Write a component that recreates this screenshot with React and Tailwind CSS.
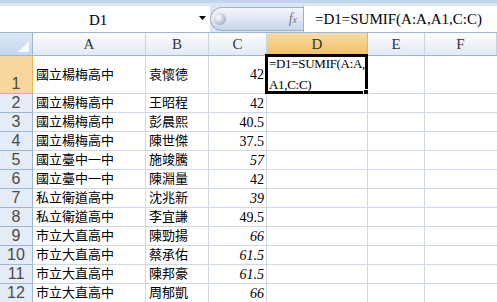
import React from "react";

const rows = [
  ["國立楊梅高中", "袁懷德", "42", false],
  ["國立楊梅高中", "王昭程", "42", false],
  ["國立楊梅高中", "彭晨熙", "40.5", false],
  ["國立楊梅高中", "陳世傑", "37.5", false],
  ["國立臺中一中", "施竣騰", "57", true],
  ["國立臺中一中", "陳淵量", "42", false],
  ["私立衛道高中", "沈兆新", "39", true],
  ["私立衛道高中", "李宜謙", "49.5", false],
  ["市立大直高中", "陳勁揚", "66", true],
  ["市立大直高中", "蔡承佑", "61.5", true],
  ["市立大直高中", "陳邦豪", "61.5", true],
  ["市立大直高中", "周郁凱", "66", true],
];

const cols = ["A", "B", "C", "D", "E", "F"];
const widths = ["w-[113px]", "w-[63px]", "w-[58px]", "w-[101px]", "w-[57px]", "flex-1"];

const serif = "font-['Liberation_Serif','Noto_Sans_CJK_TC',serif]";

const FormulaBar = () => (
  <div className="flex h-[29px] bg-[#dbe6f4]">
    <div className="w-[210px] h-[26px] mt-[3px] bg-white flex items-center relative">
      <span className={`${serif} text-[15px] text-black absolute left-[89px] top-[3px]`}>D1</span>
      <svg className="absolute left-[199px] top-[10px]" width="7" height="4" viewBox="0 0 7 4">
        <path d="M0 0 H7 L3.5 4 Z" fill="#000" />
      </svg>
    </div>
    <div className="w-[93px] h-[24px] mt-[4px] rounded-l-full border border-r-0 border-[#9fb1c9] bg-gradient-to-b from-[#f3f6fb] via-[#e0e8f3] to-[#c8d5e7] flex items-center pl-[3px] pr-[6px]">
      <div className="w-[12px] h-[12px] rounded-full bg-[radial-gradient(circle_at_35%_35%,#ffffff,#b9c3d0_60%,#8e9aab)]" />
      <span className="ml-auto font-['Liberation_Serif',serif] italic text-[14px] text-[#6d7787] leading-none">
        f<span className="text-[10px]">x</span>
      </span>
    </div>
    <div className="flex-1 h-[26px] mt-[3px] bg-white border-l border-[#9fb1c9] flex items-center pl-[11px]">
      <span className={`${serif} text-[15px] text-black whitespace-nowrap`}>=D1=SUMIF(A:A,A1,C:C)</span>
    </div>
  </div>
);

const Header = () => (
  <div className="flex h-[24px] border-t border-[#9eb6ce] border-b border-b-[#9eb6ce]">
    <div className="w-[33px] shrink-0 relative border-r border-[#9eb6ce] bg-gradient-to-b from-[#dce7f5] to-[#c6d6ec]">
      <svg className="absolute right-[3px] bottom-[3px]" width="11" height="11" viewBox="0 0 11 11">
        <path d="M11 0 V11 H0 Z" fill="#ffffff" opacity="0.9" />
      </svg>
    </div>
    {cols.map((c, i) => (
      <div
        key={c}
        className={`${widths[i]} shrink-0 flex items-center justify-center border-r ${
          c === "D"
            ? "bg-gradient-to-b from-[#f9dba4] to-[#f1c15f] border-[#f2b04e]"
            : "bg-gradient-to-b from-[#fbfcfe] to-[#e2eaf5] border-[#c5d3e3]"
        } font-['Liberation_Serif',serif] text-[15px] text-[#333]`}
      >
        {c}
      </div>
    ))}
  </div>
);

const RowHead = ({ n, sel }) => (
  <div
    className={`w-[33px] shrink-0 flex justify-center border-r border-b ${
      sel ? "bg-[#f8d79d] border-[#f2b04e] items-end pb-[1px]" : "bg-[#e4ecf7] border-[#9eb6ce] items-center"
    } font-['Liberation_Sans',sans-serif] text-[16px] text-[#4a4a4a] leading-none`}
  >
    {n}
  </div>
);

export default function App() {
  return (
    <div className="w-[497px] h-[302px] overflow-hidden bg-white">
      <div className="h-[3px] bg-[#c2d5ed]" />
      <FormulaBar />
      <Header />
      {rows.map(([a, b, c, it], i) => {
        const first = i === 0;
        return (
          <div key={i} className={`flex ${first ? "h-[38px]" : "h-[19px]"}`}>
            <RowHead n={i + 1} sel={first} />
            <div className={`w-[113px] shrink-0 border-r border-b border-[#d0d7e5] flex items-center pl-[3px] ${serif} text-[13px] text-black`}>
              {a}
            </div>
            <div className={`w-[63px] shrink-0 border-r border-b border-[#d0d7e5] flex items-center pl-[3px] ${serif} text-[13px] text-black`}>
              {b}
            </div>
            <div className={`w-[58px] shrink-0 border-r border-b border-[#d0d7e5] flex items-center justify-end pr-[2px] font-['Liberation_Serif',serif] text-[14px] text-black ${it ? "italic" : ""}`}>
              {c}
            </div>
            <div className="w-[101px] shrink-0 border-r border-b border-[#d0d7e5] relative">
              {first && (
                <div className="absolute -left-[2px] -top-[2px] w-[103px] h-[40px] border-[3px] border-black pl-[1px] flex flex-col justify-center font-['Liberation_Serif',serif] text-[13px] tracking-[-0.3px] leading-[21px] text-black">
                  <span className="whitespace-nowrap">=D1=SUMIF(A:A,</span>
                  <span className="whitespace-nowrap">A1,C:C)</span>
                  <div className="absolute -right-[4px] -bottom-[4px] w-[6px] h-[6px] bg-black border border-white" />
                </div>
              )}
            </div>
            <div className="w-[57px] shrink-0 border-r border-b border-[#d0d7e5]" />
            <div className="flex-1 border-b border-[#d0d7e5]" />
          </div>
        );
      })}
    </div>
  );
}
